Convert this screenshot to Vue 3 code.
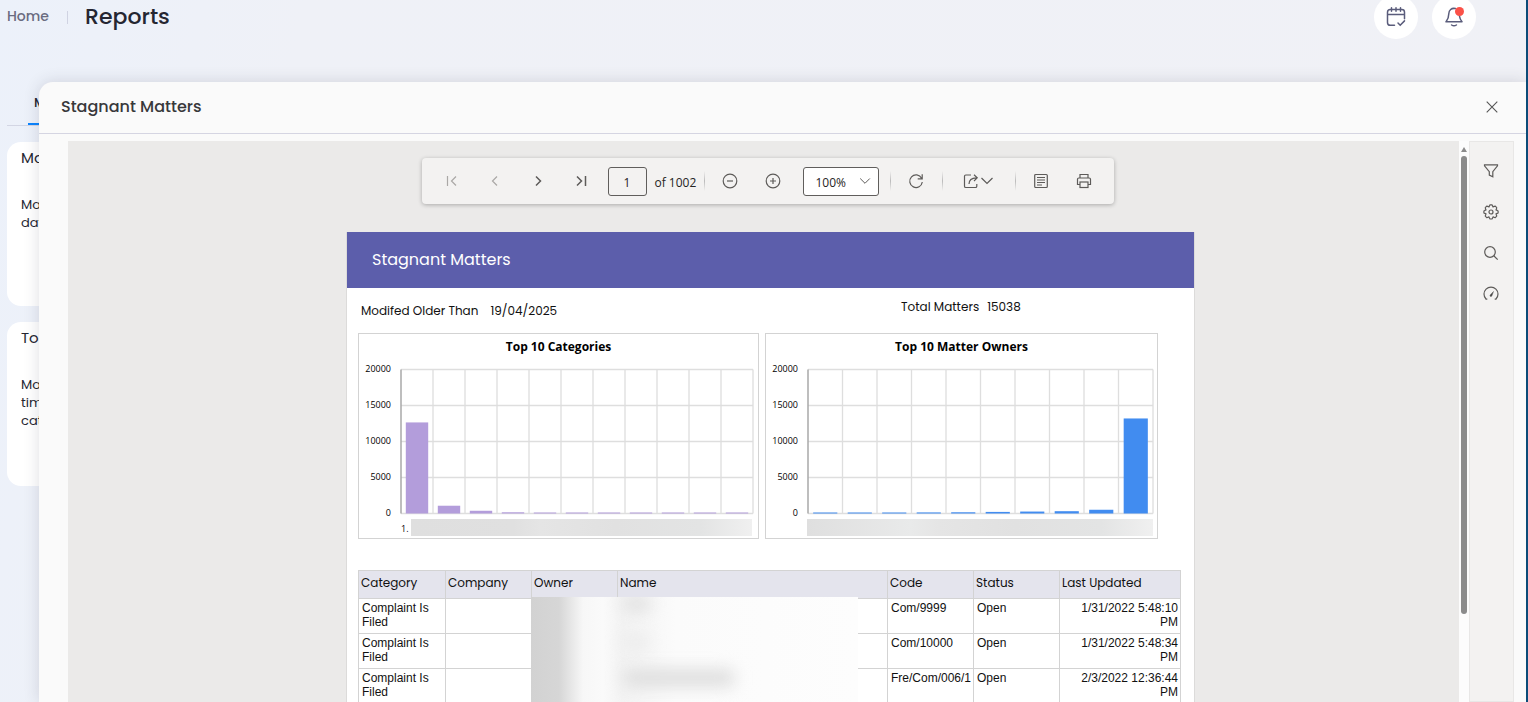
<script setup>
import { ref } from 'vue'

const pageNumber = ref('1')
const zoomLevel = ref('100%')

const ticks = [20000, 15000, 10000, 5000, 0]

function buildChart(title, width, left, right, color, values) {
  const top = 35.5
  const bottom = 179.5
  const step = (right - left) / values.length
  return {
    title,
    width,
    left,
    right,
    top,
    bottom,
    color,
    rows: ticks.map((label, i) => ({ label, y: top + i * 36 })),
    cols: values.map((_, i) => left + step * (i + 1)),
    bars: values.map((v, i) => {
      const h = Math.max(1, (v / 20000) * 144)
      return { x: left + step * i + step * 0.15, w: step * 0.7, h, y: bottom - h }
    }),
  }
}

const categories = buildChart('Top 10 Categories', 399, 42, 394, '#b39ddb',
  [12650, 1080, 380, 170, 90, 80, 70, 60, 60, 50, 50])
const owners = buildChart('Top 10 Matter Owners', 391, 42, 387, '#418cf0',
  [60, 80, 90, 150, 170, 220, 270, 320, 520, 13200])

const records = [
  { category: 'Complaint Is Filed', code: 'Com/9999', status: 'Open', updated: '1/31/2022 5:48:10 PM' },
  { category: 'Complaint Is Filed', code: 'Com/10000', status: 'Open', updated: '1/31/2022 5:48:34 PM' },
  { category: 'Complaint Is Filed', code: 'Fre/Com/006/1', status: 'Open', updated: '2/3/2022 12:36:44 PM' },
]
</script>

<template>
  <div class="app">
    <header class="topbar">
      <a class="home" href="#">Home</a>
      <span class="divider"></span>
      <h1>Reports</h1>
      <div class="actions">
        <button class="round" aria-label="Calendar">
          <svg width="20" height="20" viewBox="0 0 20 20" fill="none" stroke="#5a5c7b" stroke-width="1.5" stroke-linecap="round">
            <path d="M8.5 18.3H4.200q-2.700 0-2.700-2.700V5.200q0-2.700 2.700-2.700h11.600q2.700 0 2.700 2.700v6.600M1.500 7.500h17M5.500.8v3.400M10 .8v3.400M14.500.8v3.400M12 16l2.200 2.200 4.300-4.300" />
          </svg>
        </button>
        <button class="round" aria-label="Notifications">
          <svg width="20" height="20" viewBox="0 0 20 20" fill="none" stroke="#5a5c7b" stroke-width="1.500" stroke-linecap="round" stroke-linejoin="round">
            <path d="M11.500 1.600C7.500.6 4.800 3.300 4.800 6.800c0 4.400-1.100 5.700-2.800 8h16c-1.300-1.700-2.300-3-2.600-6M7.600 18q2.400 1.600 4.800 0" />
          </svg>
          <span class="dot"></span>
        </button>
      </div>
    </header>

    <main class="listing">
      <nav class="tabs"><a class="tab" href="#">My</a></nav>
      <article class="card">
        <h2>Matters</h2>
        <p>Matters by<br />date</p>
      </article>
      <article class="card">
        <h2>Top Matters</h2>
        <p>Matters by<br />time and<br />category</p>
      </article>
    </main>

    <section class="drawer" aria-label="Stagnant Matters">
      <header class="drawer-head">
        <h2>Stagnant Matters</h2>
        <button class="plain" aria-label="Close">
          <svg width="12" height="12" viewBox="0 0 12 12" stroke="#555" stroke-width="1.100"><path d="M.7.7l10.600 10.600M11.300.7.7 11.300" /></svg>
        </button>
      </header>

      <div class="viewer">
        <div class="canvas">
          <div class="toolbar">
            <button class="tool off" aria-label="First page">
              <svg width="16" height="16" viewBox="0 0 16 16"><path d="M3.500 3v10M12 3.500 7.500 8l4.500 4.500" /></svg>
            </button>
            <button class="tool off" aria-label="Previous page">
              <svg width="16" height="16" viewBox="0 0 16 16"><path d="M10 3.500 5.500 8l4.500 4.500" /></svg>
            </button>
            <button class="tool nav" aria-label="Next page">
              <svg width="16" height="16" viewBox="0 0 16 16"><path d="M6 3.500 10.500 8 6 12.500" /></svg>
            </button>
            <button class="tool nav" aria-label="Last page">
              <svg width="16" height="16" viewBox="0 0 16 16"><path d="M4 3.500 8.500 8 4 12.500M12.500 3v10" /></svg>
            </button>
            <input v-model="pageNumber" class="page-input" aria-label="Page number" />
            <span class="page-total">of 1002</span>
            <span class="sep"></span>
            <button class="tool" aria-label="Zoom out">
              <svg width="16" height="16" viewBox="0 0 16 16"><circle cx="8" cy="8" r="6.800" /><path d="M5 8h6" /></svg>
            </button>
            <button class="tool" aria-label="Zoom in">
              <svg width="16" height="16" viewBox="0 0 16 16"><circle cx="8" cy="8" r="6.800" /><path d="M5 8h6M8 5v6" /></svg>
            </button>
            <span class="zoom">
              <select v-model="zoomLevel" aria-label="Zoom level">
                <option>50%</option>
                <option>100%</option>
                <option>200%</option>
              </select>
              <svg class="caret" width="12" height="8" viewBox="0 0 12 8"><path d="M1.200 1.500l4.800 4.800 4.800-4.800" /></svg>
            </span>
            <span class="sep"></span>
            <button class="tool" aria-label="Refresh">
              <svg width="16" height="16" viewBox="0 0 16 16"><path d="M13.600 5.200A6.300 6.300 0 1 0 14.300 9M14.200 1.300v4.500H9.700" /></svg>
            </button>
            <span class="sep"></span>
            <button class="tool wide" aria-label="Export">
              <svg width="16" height="16" viewBox="0 0 16 16"><path d="M8 2H2.800Q1.500 2 1.500 3.300v9.900q0 1.300 1.300 1.300h9.700q1.300 0 1.300-1.300V11M6 11q0-6 7.500-6.200M11 1.800l3.200 3L11 8" /></svg>
              <svg width="14" height="8" viewBox="0 0 14 8"><path d="M1.500 1 7 6.500 12.500 1" /></svg>
            </button>
            <span class="sep"></span>
            <button class="tool" aria-label="Document map">
              <svg width="16" height="16" viewBox="0 0 16 16"><rect x="1.700" y="1.500" width="12.600" height="13" rx="1" /><path d="M4 4.500h8M4 7h8M4 9.500h8M4 12h5" /></svg>
            </button>
            <button class="tool" aria-label="Print">
              <svg width="16" height="16" viewBox="0 0 16 16"><path d="M4 5V1.500h8V5M4 11.500H1.500V6.300Q1.500 5 2.800 5h10.400q1.300 0 1.300 1.300v5.200H12" /><rect x="4" y="9" width="8" height="5.500" /></svg>
            </button>
          </div>

          <article class="report">
            <h3 class="banner">Stagnant Matters</h3>
            <div class="params">
              <p class="modified"><span>Modifed Older Than</span><span>19/04/2025</span></p>
              <p class="total"><span>Total Matters</span><span>15038</span></p>
            </div>

            <div class="charts">
              <figure v-for="(chart, n) in [categories, owners]" :key="chart.title" class="chart">
                <svg :width="chart.width" height="204" :viewBox="`0 0 ${chart.width} 204`">
                  <text class="chart-title" :x="chart.width / 2" y="17">{{ chart.title }}</text>
                  <g v-for="row in chart.rows" :key="row.label">
                    <line :x1="chart.left" :x2="chart.right" :y1="row.y" :y2="row.y" class="grid" />
                    <text class="tick" :x="chart.left - 10" :y="row.y + 2.5">{{ row.label }}</text>
                  </g>
                  <line v-for="x in chart.cols" :key="x" :x1="x" :x2="x" :y1="chart.top" :y2="chart.bottom" class="grid" />
                  <line :x1="chart.left" :x2="chart.left" :y1="chart.top" :y2="chart.bottom" class="axis" />
                  <rect v-for="bar in chart.bars" :key="bar.x" :x="bar.x" :y="bar.y" :width="bar.w" :height="bar.h" :fill="chart.color" />
                  <defs>
                    <linearGradient :id="'strip' + n">
                      <stop offset="0" stop-color="#dfdfdf" />
                      <stop offset=".3" :stop-color="n ? '#e9eaea' : '#e0e0e0'" />
                      <stop offset=".38" stop-color="#e5e5e5" />
                      <stop offset=".6" stop-color="#e1e1e1" />
                      <stop offset=".85" stop-color="#e3e4e4" />
                      <stop offset="1" stop-color="#f0f0f0" />
                    </linearGradient>
                  </defs>
                  <text v-if="n === 0" class="tick first" x="42" y="198">1.</text>
                  <rect :x="n ? 41 : 52" y="185" :width="n ? 346 : 341" height="17" :fill="`url(#strip${n})`" />
                </svg>
              </figure>
            </div>

            <div class="table-wrap">
              <table>
                <colgroup>
                  <col class="c-first" /><col class="c-std" /><col class="c-std" /><col class="c-name" /><col class="c-std" /><col class="c-std" /><col class="c-date" />
                </colgroup>
                <thead>
                  <tr>
                    <th>Category</th><th>Company</th><th>Owner</th><th>Name</th><th>Code</th><th>Status</th><th>Last Updated</th>
                  </tr>
                </thead>
                <tbody>
                  <tr v-for="r in records" :key="r.code">
                    <td>{{ r.category }}</td><td></td><td></td><td></td><td>{{ r.code }}</td><td>{{ r.status }}</td><td class="date">{{ r.updated }}</td>
                  </tr>
                </tbody>
              </table>
              <div class="redaction"><i class="smudge one"></i><i class="smudge two"></i><i class="smudge three"></i></div>
            </div>
          </article>
        </div>

        <div class="scroll" aria-hidden="true">
          <span class="arrow"></span>
          <span class="thumb"></span>
        </div>

        <aside class="side">
          <button class="plain" aria-label="Parameters">
            <svg width="16" height="16" viewBox="0 0 16 16"><path d="M1.500 1.800h13v1L9.800 8.700v5L6.300 12V8.700L1.500 2.800z" /></svg>
          </button>
          <button class="plain" aria-label="Settings">
            <svg width="16" height="16" viewBox="0 0 16 16"><circle cx="8" cy="8" r="2" /><path d="M6.500 1.700 7 .8h2l.5.900.5 1.200 1.300-.5 1-.2 1.400 1.400-.2 1-.5 1.300 1.200.5.900.5v2l-.9.500-1.200.5.5 1.300.2 1-1.400 1.400-1-.2-1.300-.5-.5 1.200-.5.900H7l-.5-.9-.5-1.200-1.300.5-1 .2-1.400-1.400.2-1 .5-1.300-1.200-.5-.9-.5v-2l.9-.5L3 5.900l-.5-1.300-.2-1 1.400-1.400 1 .2 1.300.5z" stroke-linejoin="round" /></svg>
          </button>
          <button class="plain" aria-label="Search">
            <svg width="16" height="16" viewBox="0 0 16 16"><circle cx="7" cy="7" r="5.300" /><path d="m11 11 3.700 3.700" /></svg>
          </button>
          <button class="plain" aria-label="Performance">
            <svg width="16" height="16" viewBox="0 0 16 16"><path d="M3 13A7 7 0 1 1 13 13M2.500 13.200h1.800M13.500 13.200h-1.800" /><path d="M10.500 5.500 8.800 10q-.8 1-1.600.2-.5-.8.200-1.500z" fill="#444" stroke-width=".5" /></svg>
          </button>
        </aside>
      </div>
    </section>
  </div>
</template>

<style>
body { margin: 0; }
</style>

<style scoped>
* { box-sizing: border-box; }
h1, h2, h3, p, figure { margin: 0; font-weight: 400; }
button { border: 0; padding: 0; background: none; font: inherit; display: flex; align-items: center; justify-content: center; }
a { text-decoration: none; color: inherit; }

.app {
  position: relative;
  height: 100vh;
  overflow: hidden;
  font-family: Poppins, Inter, sans-serif;
  color: #252631;
  background: linear-gradient(100deg, #ecf1fa 0, #eff1f7 300px, #f0f1f6 100%);
  border-right: 2px solid #0b4b78;
}

.topbar { display: flex; align-items: center; height: 34px; padding: 0 50px 0 7px; }
.home { padding-bottom: 1px; font-size: 14px; font-weight: 500; color: #6a6b80; }
.divider { width: 1px; height: 13px; margin: 0 17px 0 18px; background: #d0d3e2; }
h1 { padding-bottom: 2px; font-size: 22px; font-weight: 500; }
.actions { display: flex; gap: 14px; margin-left: auto; }
.round { position: relative; width: 44px; height: 44px; border-radius: 50%; background: #fff; }
.dot { position: absolute; top: 12px; right: 12px; width: 9px; height: 9px; border-radius: 50%; background: #fb5148; }

.listing { padding: 60px 24px 0 7px; }
.tabs { display: flex; height: 32px; margin-bottom: 16px; padding-left: 21px; border-bottom: 1px solid #d3d6e4; }
.tab { padding: 0 6px; line-height: 18px; font-size: 13px; font-weight: 500; border-bottom: 2px solid #0b84ff; }
.card { width: 320px; height: 164px; margin-bottom: 16px; padding: 5px 14px; border-radius: 14px; background: #fff; }
.card h2 { font-size: 15px; line-height: 22px; margin-bottom: 27px; }
.card p { font-size: 13px; line-height: 18px; }

.drawer {
  position: absolute;
  inset: 82px 0 0 39px;
  display: flex;
  flex-direction: column;
  border-top-left-radius: 14px;
  background: #fafafa;
  box-shadow: 0 0 16px rgba(50, 50, 70, .16);
}
.drawer-head { display: flex; align-items: center; justify-content: space-between; height: 52px; flex: none; padding: 0 28px 2px 22px; border-bottom: 1px solid #d5d5e2; }
.drawer-head h2 { font-size: 16px; font-weight: 500; color: #38383a; }

.viewer { flex: 1; min-height: 0; display: flex; padding: 7px 12px 0 29px; }
.canvas { flex: 1; min-width: 0; display: flex; flex-direction: column; align-items: center; padding: 17px 0 0 14px; background: #ebeae9; overflow: hidden; }

.toolbar {
  display: flex;
  align-items: center;
  height: 46px;
  margin: 0 6px 28px 0;
  padding: 0 8px 0 9px;
  flex: none;
  border-radius: 4px;
  background: #f3f2f1;
  box-shadow: 0 1px 4px rgba(0, 0, 0, .28);
  font-family: "Segoe UI", "Open Sans", sans-serif;
  font-size: 12px;
  color: #252423;
}
.toolbar svg, .side svg { fill: none; stroke: #5d5b59; stroke-width: 1.2; }
.tool { width: 43px; height: 40px; }
.tool.wide { width: 64px; gap: 1px; }
.toolbar .nav svg { stroke-width: 1.5; }
.toolbar .off svg { stroke: #aaa8a6; }
.page-input { width: 39px; height: 29px; margin-left: 5px; padding: 2px 0 0; border: 1px solid #605e5c; border-radius: 3px; background: transparent; text-align: center; font: inherit; color: inherit; }
.page-total { width: 53px; padding: 2px 0 0 8px; white-space: nowrap; }
.sep { width: 9px; height: 20px; background: linear-gradient(transparent, #bbb 50%, transparent) center / 1px 100% no-repeat; }
.zoom { display: flex; position: relative; margin: 0 7px 0 8px; }
.zoom select { width: 76px; height: 29px; padding: 2px 0 0 12px; appearance: none; border: 1px solid #605e5c; border-radius: 3px; background: #fff; font: inherit; color: inherit; }
.toolbar .caret { position: absolute; right: 8px; top: 10px; pointer-events: none; stroke-width: 1; }

.report { width: 849px; flex: 1 0 auto; border: solid #dcdbda; border-width: 0 1px; background: #fff; color: #111; }
.banner { height: 56px; padding-left: 25px; line-height: 55px; font-size: 16px; color: #fff; background: #5c5eab; }
.params { display: flex; height: 45px; padding-left: 14px; font-size: 12px; line-height: 18px; }
.params p { display: flex; }
.modified { width: 540px; padding-top: 14px; gap: 12px; }
.total { padding-top: 10px; gap: 8px; }

.charts { display: flex; gap: 6px; padding-left: 11px; }
.chart { display: flex; border: 1px solid #d3d3d3; }
.chart text { font-family: "Segoe UI", "Open Sans", sans-serif; fill: #000; }
.chart .chart-title { font-size: 12px; font-weight: 700; text-anchor: middle; }
.chart .tick { font-size: 9px; text-anchor: end; }
.chart .first { text-anchor: start; }
.grid { stroke: #dedede; stroke-width: 1.3; }
.axis { stroke: #a8a8a8; stroke-width: 1.5; }

.table-wrap { position: relative; margin: 31px 0 0 11px; }
table { width: 822px; table-layout: fixed; border-collapse: collapse; font-family: Arial, "Liberation Sans", sans-serif; font-size: 12px; line-height: 14px; }
.c-first { width: 87px; }
.c-std { width: 86px; }
.c-name { width: 270px; }
.c-date { width: 121px; }
th, td { border: 1px solid #d3d3d3; padding: 2px 2px 4px 3px; text-align: left; vertical-align: top; }
th { height: 28px; padding: 3px 2px; background: #e4e4ed; font-family: Poppins, Inter, sans-serif; font-size: 12px; font-weight: 400; line-height: 18px; }
td { height: 35px; }
td.date { text-align: right; }
.redaction {
  position: absolute;
  left: 173px;
  top: 27px;
  width: 327px;
  height: 120px;
  overflow: hidden;
  background: linear-gradient(90deg, #d2d2d2 0, #d6d6d6 28px, #f7f7f7 52px, #fafafa 72px, #f3f3f3 92px, #fbfbfb 145px, #fdfdfd 100%);
}
.smudge { position: absolute; border-radius: 8px; filter: blur(8px); background: #dedede; }
.one { left: 92px; top: 0; width: 28px; height: 14px; }
.two { left: 92px; top: 36px; width: 26px; height: 18px; background: #ececec; }
.three { left: 92px; top: 72px; width: 112px; height: 18px; }

.scroll { width: 10px; display: flex; flex-direction: column; align-items: center; padding-top: 6px; background: #fcfcfc; }
.arrow { border: 3px solid transparent; border-top: 0; border-bottom: 5px solid #8b8b8b; margin-bottom: 4px; }
.thumb { width: 6px; height: 458px; border-radius: 3px; background: #8b8b8b; }

.side { width: 45px; display: flex; flex-direction: column; align-items: center; gap: 25px; padding: 21px 2px 0 0; border: 1px solid #e8e7e6; background: #f3f2f1; }
</style>
